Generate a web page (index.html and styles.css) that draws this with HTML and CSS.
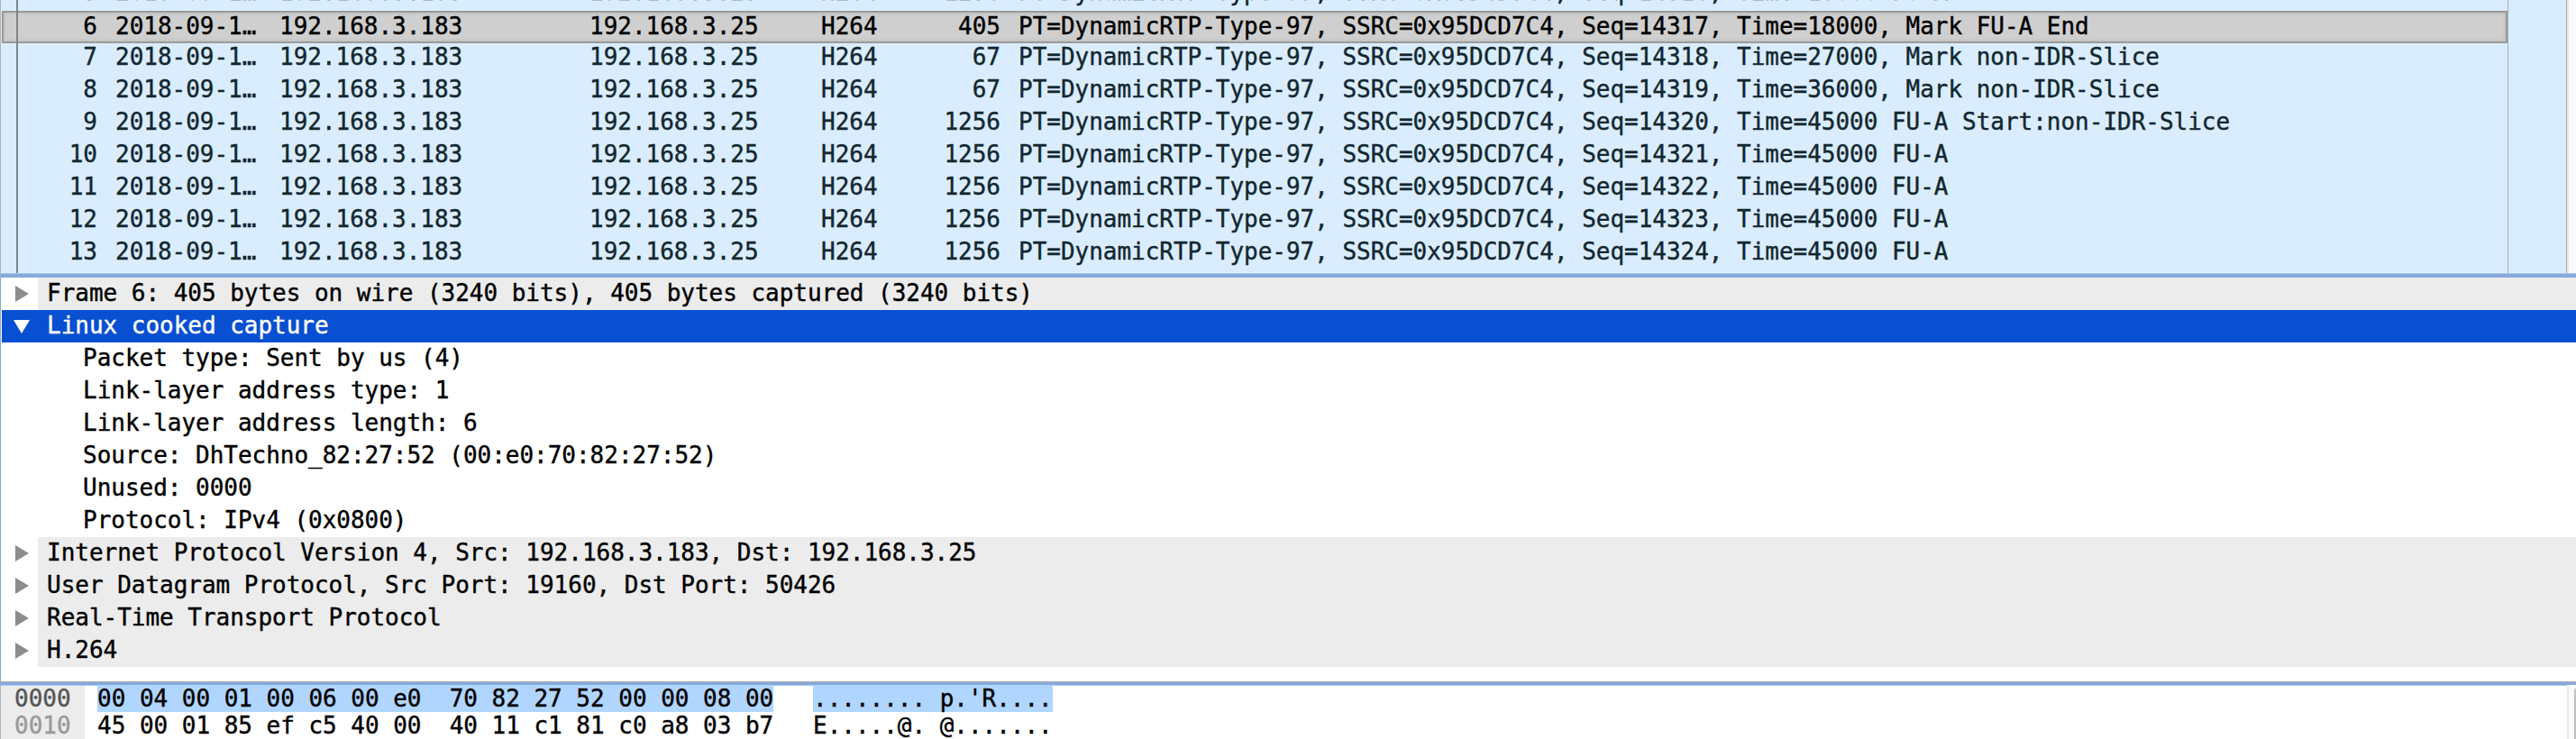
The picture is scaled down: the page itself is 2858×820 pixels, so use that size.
FILE: index.html
```html
<!DOCTYPE html>
<html lang="en">
<head>
    <meta charset="UTF-8">
    <title>Packet capture</title>
    <link rel="stylesheet" href="styles.css">
</head>
<body>

    <!-- Packet list -->
    <div class="packets">
        <div class="list">
            <div class="row"><span class="no">5</span><span class="time">2018-09-1…</span><span class="src">192.168.3.183</span><span class="dst">192.168.3.25</span><span class="proto">H264</span><span class="len">1256</span><span class="info">PT=DynamicRTP-Type-97, SSRC=0x95DCD7C4, Seq=14316, Time=18000 FU-A</span></div>
            <div class="row selected"><span class="no">6</span><span class="time">2018-09-1…</span><span class="src">192.168.3.183</span><span class="dst">192.168.3.25</span><span class="proto">H264</span><span class="len">405</span><span class="info">PT=DynamicRTP-Type-97, SSRC=0x95DCD7C4, Seq=14317, Time=18000, Mark FU-A End</span></div>
            <div class="row"><span class="no">7</span><span class="time">2018-09-1…</span><span class="src">192.168.3.183</span><span class="dst">192.168.3.25</span><span class="proto">H264</span><span class="len">67</span><span class="info">PT=DynamicRTP-Type-97, SSRC=0x95DCD7C4, Seq=14318, Time=27000, Mark non-IDR-Slice</span></div>
            <div class="row"><span class="no">8</span><span class="time">2018-09-1…</span><span class="src">192.168.3.183</span><span class="dst">192.168.3.25</span><span class="proto">H264</span><span class="len">67</span><span class="info">PT=DynamicRTP-Type-97, SSRC=0x95DCD7C4, Seq=14319, Time=36000, Mark non-IDR-Slice</span></div>
            <div class="row"><span class="no">9</span><span class="time">2018-09-1…</span><span class="src">192.168.3.183</span><span class="dst">192.168.3.25</span><span class="proto">H264</span><span class="len">1256</span><span class="info">PT=DynamicRTP-Type-97, SSRC=0x95DCD7C4, Seq=14320, Time=45000 FU-A Start:non-IDR-Slice</span></div>
            <div class="row"><span class="no">10</span><span class="time">2018-09-1…</span><span class="src">192.168.3.183</span><span class="dst">192.168.3.25</span><span class="proto">H264</span><span class="len">1256</span><span class="info">PT=DynamicRTP-Type-97, SSRC=0x95DCD7C4, Seq=14321, Time=45000 FU-A</span></div>
            <div class="row"><span class="no">11</span><span class="time">2018-09-1…</span><span class="src">192.168.3.183</span><span class="dst">192.168.3.25</span><span class="proto">H264</span><span class="len">1256</span><span class="info">PT=DynamicRTP-Type-97, SSRC=0x95DCD7C4, Seq=14322, Time=45000 FU-A</span></div>
            <div class="row"><span class="no">12</span><span class="time">2018-09-1…</span><span class="src">192.168.3.183</span><span class="dst">192.168.3.25</span><span class="proto">H264</span><span class="len">1256</span><span class="info">PT=DynamicRTP-Type-97, SSRC=0x95DCD7C4, Seq=14323, Time=45000 FU-A</span></div>
            <div class="row"><span class="no">13</span><span class="time">2018-09-1…</span><span class="src">192.168.3.183</span><span class="dst">192.168.3.25</span><span class="proto">H264</span><span class="len">1256</span><span class="info">PT=DynamicRTP-Type-97, SSRC=0x95DCD7C4, Seq=14324, Time=45000 FU-A</span></div>
            <div class="stream-line"></div>
        </div>
        <div class="minimap"></div>
        <div class="scroll"></div>
    </div>

    <!-- Packet details -->
    <div class="details">
        <div class="item"><span class="arrow"><svg width="15" height="18"><path d="M0 0L15 9L0 18Z"/></svg></span><span class="label">Frame 6: 405 bytes on wire (3240 bits), 405 bytes captured (3240 bits)</span></div>
        <div class="item active"><span class="arrow open"><svg width="18" height="15"><path d="M0 0H18L9 15Z"/></svg></span><span class="label">Linux cooked capture</span></div>
        <div class="field">Packet type: Sent by us (4)</div>
        <div class="field">Link-layer address type: 1</div>
        <div class="field">Link-layer address length: 6</div>
        <div class="field">Source: DhTechno_82:27:52 (00:e0:70:82:27:52)</div>
        <div class="field">Unused: 0000</div>
        <div class="field">Protocol: IPv4 (0x0800)</div>
        <div class="item"><span class="arrow"><svg width="15" height="18"><path d="M0 0L15 9L0 18Z"/></svg></span><span class="label">Internet Protocol Version 4, Src: 192.168.3.183, Dst: 192.168.3.25</span></div>
        <div class="item"><span class="arrow"><svg width="15" height="18"><path d="M0 0L15 9L0 18Z"/></svg></span><span class="label">User Datagram Protocol, Src Port: 19160, Dst Port: 50426</span></div>
        <div class="item"><span class="arrow"><svg width="15" height="18"><path d="M0 0L15 9L0 18Z"/></svg></span><span class="label">Real-Time Transport Protocol</span></div>
        <div class="item"><span class="arrow"><svg width="15" height="18"><path d="M0 0L15 9L0 18Z"/></svg></span><span class="label">H.264</span></div>
    </div>

    <!-- Packet bytes -->
    <div class="bytes">
        <div class="offsets">
            <div class="current">0000</div>
            <div>0010</div>
        </div>
        <div class="dump">
            <div class="line"><span class="mark">00 04 00 01 00 06 00 e0  70 82 27 52 00 00 08 00</span></div>
            <div class="line">45 00 01 85 ef c5 40 00  40 11 c1 81 c0 a8 03 b7</div>
        </div>
        <div class="ascii">
            <div class="line"><span class="mark">........ p.'R....</span></div>
            <div class="line">E.....@. @.......</div>
        </div>
        <div class="bytes-scroll"><div class="thumb"></div></div>
    </div>

</body>
</html>
```
FILE: styles.css
```css
* {
    box-sizing: border-box;
}

body {
    margin: 0;
    width: 2858px;
    height: 820px;
    overflow: hidden;
    background: #fff;
    color: #000;
    font-family: Menlo, "DejaVu Sans Mono", monospace;
    font-size: 26px;
    letter-spacing: -0.025px;
    -webkit-text-stroke: 0.4px;
    display: flex;
    flex-direction: column;
}

/* packet list */
.packets {
    display: flex;
    height: 308px;
    flex: none;
    overflow: hidden;
    border-left: 1px solid #b4b4b4;
    border-bottom: 4px solid #87a9dc;
    background: #daedff;
    box-shadow: inset 0 -1px #a5c8f0;
}
.list {
    position: relative;
    width: 2781px;
    margin-top: -24px;
    padding-left: 1px;
}
.row {
    display: grid;
    grid-template-columns: 106px 202px 344px 257px 100px 99px 1fr;
    height: 36px;
    line-height: 30px;
    color: #12272e;
}
.no, .len {
    text-align: right;
}
.time {
    padding-left: 20px;
}
.info {
    padding-left: 20px;
}
.row.selected {
    grid-template-columns: 104px 202px 344px 257px 100px 99px 1fr;
    border: 2px solid #9c9a9b;
    background: #cfcfcf;
    box-shadow: inset 0 0 5px #b8b8b8;
    color: #000;
}
.stream-line {
    position: absolute;
    left: 17px;
    top: 0;
    width: 2px;
    height: 327px;
    background: #7d858c;
}
.minimap {
    width: 66px;
    border-left: 1px solid #a9adb2;
    border-right: 1px solid #a9adb2;
}
.scroll {
    flex: 1;
    height: 303px;
    background: #fafafa;
    border-left: 2px solid #e6e6e6;
}

/* packet details */
.details {
    height: 448px;
    flex: none;
    border-left: 1px solid #87a9dc;
    padding-left: 1px;
}
.item {
    display: flex;
    height: 36px;
    line-height: 34px;
}
.arrow {
    width: 40px;
    padding: 9px 0 0 15px;
    line-height: 0;
    fill: #8c8c8c;
}
.arrow.open {
    padding: 11px 0 0 13px;
    fill: #fff;
}
.label {
    flex: 1;
    padding-left: 10px;
    background: #ececec;
}
.item.active, .active .label {
    background: #094fd1;
    color: #fff;
}
.field {
    height: 36px;
    line-height: 34px;
    padding-left: 90px;
}

/* packet bytes */
.bytes {
    display: flex;
    flex: none;
    height: 64px;
    padding-top: 3px;
    line-height: 30px;
    overflow: hidden;
    border-top: 1px solid #adadad;
    background: #fff;
    box-shadow: inset 0 3px #87a9dc;
}
.offsets {
    width: 94px;
    padding-left: 15px;
    border-left: 1px solid #b4b4b4;
    background: #ececec;
    color: #999;
}
.offsets .current {
    color: #555;
}
.dump {
    width: 794px;
    padding-left: 14px;
}
.ascii {
    flex: 1;
    padding-left: 14px;
}
.line {
    white-space: pre;
}
.mark {
    display: inline-block;
    background: #b0d6ff;
}
.offsets, .dump, .ascii {
    box-shadow: inset 0 1px #a5c8f0;
}
.bytes-scroll {
    width: 10px;
    padding: 4px 0 0 6px;
    border-left: 2px solid #e8e8e8;
    background: #fafafa;
}
.thumb {
    height: 60px;
    background: #c1c1c1;
    border-radius: 2px 0 0 0;
}
```
